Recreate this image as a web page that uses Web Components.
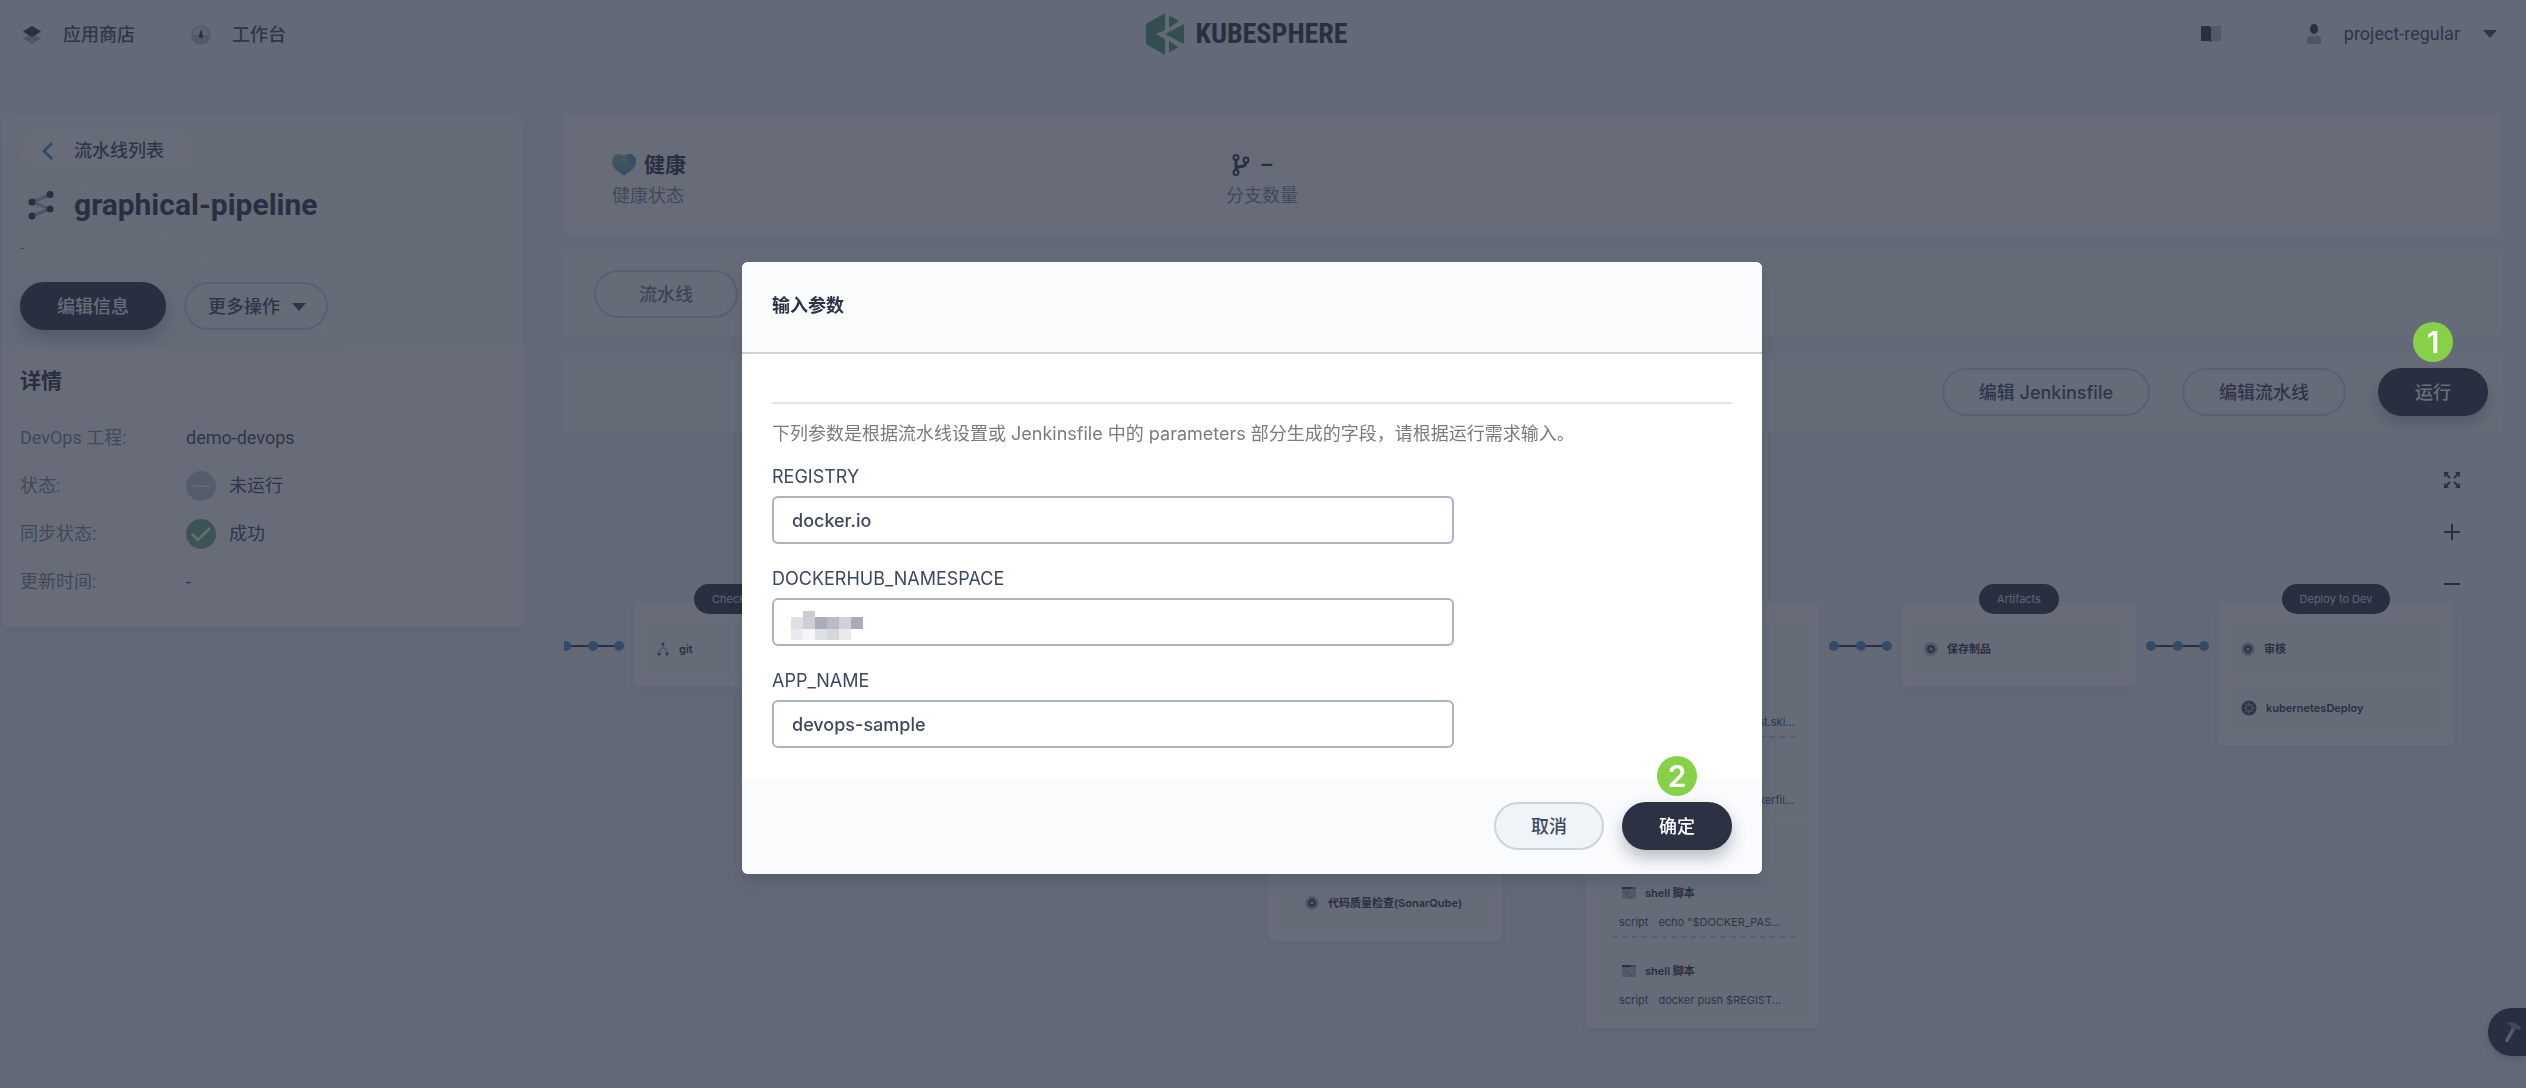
<!DOCTYPE html>
<html lang="zh-CN">
<head>
<meta charset="utf-8">
<title>KubeSphere</title>
<style>
    html, body {
        margin: 0;
        height: 100%;
        overflow: hidden;
    }
    body {
        background: #eff4f9;
        color: #2c3144;
        font-family: Roboto, "Noto Sans CJK SC", sans-serif;
        font-size: 18px;
        line-height: 28px;
    }
</style>
</head>
<body>
<ks-app></ks-app>

<script>
const ICONS = {
    store: ['0 0 20 20', '<path d="M1 13.500 10 8l9 5.500L10 19z" fill="#a9b3c1"/><path d="M1 6.500 10 1l9 5.500L10 12z" fill="#2c3144"/>'],
    dial: ['0 0 20 20', '<circle cx="10" cy="10" r="9" fill="#dfe4eb" stroke="#b6c0cc" stroke-width="1.500"/><path d="M1 10a9 9 0 0 0 18 0z" fill="#b6c0cc"/><path d="M10 4l2 7a2 2 0 1 1-4 0z" fill="#2c3144"/>'],
    book: ['0 0 20 16', '<path d="M0 0h8l2 1v15l-2-1H0z" fill="#2c3144"/><path d="M12 0h8v15h-8l-2 1V1z" fill="#b6c0cc"/>'],
    human: ['0 0 14 20', '<ellipse cx="7" cy="5" rx="4" ry="5" fill="#2c3144"/><path d="M0 20v-4q0-4 4-4.500 3 2 6 0 4 .5 4 4.500v4z" fill="#a9b3c1"/>'],
    caret: ['0 0 14 8', '<path d="M0 0h14L7 8z" fill="#3d4860"/>'],
    back: ['0 0 12 18', '<path d="M10 1 2 9l8 8" fill="none" stroke="#3a8cc8" stroke-width="2.500"/>'],
    pipeline: ['0 0 26 30', '<path d="M22 5 4 12l18 7L4 26" fill="none" stroke="#a9b3c1" stroke-width="3"/><g fill="#2c3144"><circle cx="22" cy="4.500" r="3.500"/><circle cx="4" cy="12" r="3.500"/><circle cx="22" cy="19" r="3.500"/><circle cx="4" cy="26" r="3.500"/></g>'],
    stopped: ['0 0 30 30', '<circle cx="15" cy="15" r="15" fill="#c0c8d2"/><path d="M7 15h16" stroke="#eff4f9" stroke-width="2"/>'],
    success: ['0 0 30 30', '<circle cx="15" cy="15" r="15" fill="#6fae8f"/><path d="m6 15 6 6L24 9" fill="none" stroke="#fff" stroke-width="2.500"/>'],
    heart: ['0 0 24 22', '<defs><linearGradient id="g" x1="0" y1="0" x2="0" y2="1"><stop offset="0" stop-color="#7ec095"/><stop offset=".5" stop-color="#6fb0a5"/><stop offset="1" stop-color="#4d94c8"/></linearGradient></defs><path d="M12 22C8 18 0 15 0 8 0 2 4 0 7 0q3 0 5 1.500Q14 0 17 0c3 0 7 2 7 8 0 7-8 10-12 14z" fill="url(#g)"/><path d="M16 0q-2 7 5 12 4-4 3-7-2-5-8-5z" fill="#5c9fb8"/>'],
    branch: ['-6 0 26 22', '<g fill="none" stroke="#2c3144" stroke-width="2"><circle cx="4" cy="3.500" r="2.500"/><circle cx="14" cy="6" r="2.500"/><circle cx="4" cy="18.500" r="2.500"/></g><path d="M4 6v10q0-3 5-3.500 5-.5 5-4" fill="none" stroke="#2c3144" stroke-width="3"/>'],
    expand: ['0 0 16 16', '<path d="m1 1 5 5M15 1l-5 5M1 15l5-5M15 15l-5-5" stroke="#2c3144" stroke-width="2"/><path d="M0 0h5L0 5zM16 0v5l-5-5zM0 16v-5l5 5zM16 16h-5l5-5z" fill="#2c3144"/>'],
    plus: ['0 0 16 16', '<path d="M8 0v16M0 8h16" stroke="#2c3144" stroke-width="2"/>'],
    minus: ['0 0 16 16', '<path d="M0 8h16" stroke="#2c3144" stroke-width="2"/>'],
    git: ['0 0 14 14', '<path d="M7 3v3M3 12q0-6 4-6t4 6" fill="none" stroke="#a9b3c1" stroke-width="1.500"/><g fill="#3d4860"><circle cx="7" cy="2" r="1.500"/><circle cx="3" cy="12" r="1.500"/><circle cx="11" cy="12" r="1.500"/></g>'],
    step: ['0 0 14 14', '<circle cx="7" cy="7" r="7" fill="#b6c0cc"/><circle cx="7" cy="7" r="3" fill="none" stroke="#3d4860" stroke-width="2.500"/>'],
    kube: ['0 0 16 16', '<circle cx="8" cy="8" r="7.500" fill="#3d4860"/><g fill="none" stroke="#a9b3c1"><circle cx="8" cy="8" r="3.500"/><path d="M8 2v4M8 10v4M2 8h4M10 8h4M4 4l2.500 2.500M9.500 9.500 12 12M12 4 9.500 6.500M6.500 9.500 4 12"/></g>'],
    shell: ['0 0 14 12', '<path d="M0 2h14v10H0z" fill="#b6c0cc"/><path d="M0 0h9v2H0z" fill="#2c3144"/><path d="M9 0h5v2H9z" fill="#7d8a9e"/><path d="m4 5 2 2-2 2M7 10h3" fill="none" stroke="#7d8a9e"/>'],
    hammer: ['0 0 18 22', '<path d="m8 7 3 1.500L4 21q-3 0-3-2z" fill="#c6ccd6"/><path d="M2 3q6-4 12 1l3 2-1.500 3-3-1L11 9 7 7V4z" fill="#7d8699"/>'],
    logo: ['0 0 38 42', '<g fill="#4f9b7a"><path d="M0 11 19 0v17L10 21l9 5v16L0 31z"/><path d="M23 2.500 33 8l-10 7z"/><path d="M38 11v20L19 21z"/><path d="M23 28l9.500 6L23 39.500z"/></g>']
};

// shared by every element: clones a template into an open shadow root
class KsElement extends HTMLElement {
    connectedCallback() {
        if (this.shadowRoot) return;
        const template = document.createElement('template');
        template.innerHTML = this.render();
        this.attachShadow({ mode: 'open' }).appendChild(template.content.cloneNode(true));
    }

    attr(name, fallback = '') {
        return this.getAttribute(name) || fallback;
    }
}

class KsIcon extends KsElement {
    render() {
        const [viewBox, body] = ICONS[this.attr('name')];
        const [, , width, height] = viewBox.split(' ');
        return `
            <style>
                :host { display: inline-flex; flex: none; }
                svg { display: block; }
            </style>
            <svg viewBox="${viewBox}" width="${width}" height="${height}" aria-hidden="true">${body}</svg>
        `;
    }
}

class KsButton extends KsElement {
    render() {
        return `
            <style>
                :host { display: inline-block; position: relative; }
                button {
                    display: flex;
                    align-items: center;
                    justify-content: center;
                    gap: 12px;
                    box-sizing: border-box;
                    height: 48px;
                    padding: 2px 35px 0;
                    border: 2px solid #ccd3db;
                    border-radius: 24px;
                    background: #eff4f9;
                    color: #3d4860;
                    font: inherit;
                    font-weight: 500;
                    white-space: nowrap;
                }
                :host([kind="ghost"]) button { background: transparent; }
                :host([kind="menu"]) button { background: transparent; padding: 2px 20px 0 22px; }
                :host([kind="tab"]) button { background: transparent; padding: 2px 43px 0; color: #6a7488; }
                :host([kind="primary"]) button {
                    border-color: #2c3144;
                    background: #2c3144;
                    color: #fff;
                    box-shadow: 0 8px 16px rgba(36, 46, 66, .3);
                }
            </style>
            <button type="button"><slot></slot></button>
            <slot name="badge"></slot>
        `;
    }
}

// numbered marker that floats above a button, over the mask as well
class StepBadge extends KsElement {
    render() {
        return `
            <style>
                :host {
                    position: absolute;
                    left: 50%;
                    bottom: 100%;
                    z-index: 20;
                    width: 40px;
                    height: 40px;
                    margin: 0 0 6px -20px;
                    border-radius: 50%;
                    background: #87d148;
                    color: #fff;
                    font: 600 30px/40px Inter, sans-serif;
                    text-align: center;
                }
            </style>
            <slot></slot>
        `;
    }
}

class KsHeader extends KsElement {
    render() {
        return `
            <style>
                :host {
                    display: grid;
                    grid-template-columns: 1fr auto 1fr;
                    box-sizing: border-box;
                    height: 83px;
                    padding: 13px 54px 0 22px;
                    border-bottom: 1px solid #e9eef4;
                }
                a { color: #3d4860; text-decoration: none; font-weight: 500; }
                nav, .user { display: flex; align-items: center; height: 42px; }
                nav { gap: 56px; }
                nav a { display: flex; align-items: center; gap: 21px; padding-top: 2px; }
                .logo {
                    display: flex;
                    align-items: center;
                    gap: 11px;
                    height: 42px;
                    color: #2c3144;
                    font-family: "Liberation Sans Narrow", "Roboto Condensed", Roboto, sans-serif;
                    font-size: 28px;
                    font-weight: 700;
                }
                .user { justify-content: flex-end; gap: 23px; margin-right: -25px; }
                .user ks-icon:first-child { margin-right: 63px; }
                .user a { font-weight: 400; }
            </style>
            <nav>
                <a href="#apps"><ks-icon name="store"></ks-icon>应用商店</a>
                <a href="#workbench"><ks-icon name="dial"></ks-icon>工作台</a>
            </nav>
            <a class="logo" href="#home"><ks-icon name="logo"></ks-icon>KUBESPHERE</a>
            <div class="user">
                <ks-icon name="book"></ks-icon>
                <ks-icon name="human"></ks-icon>
                <a href="#user">project-regular</a>
                <ks-icon name="caret"></ks-icon>
            </div>
        `;
    }
}

class KsSidebar extends KsElement {
    render() {
        return `
            <style>
                :host {
                    display: block;
                    border-radius: 6px;
                    background: #fff;
                    box-shadow: 0 4px 8px rgba(36, 46, 66, .08);
                    overflow: hidden;
                }
                .top {
                    box-sizing: border-box;
                    height: 234px;
                    padding: 18px 18px 0;
                    background: linear-gradient(211deg, #f5f8fb 38%, #f9fbfd 38%, #f9fbfd 62%, #f6f9fc 62%);
                }
                .back {
                    display: inline-flex;
                    align-items: center;
                    gap: 20px;
                    box-sizing: border-box;
                    height: 36px;
                    padding: 2px 30px 0 22px;
                    border-radius: 18px;
                    background: #fff;
                    color: #3d4860;
                    font-weight: 500;
                    text-decoration: none;
                }
                h1 {
                    display: flex;
                    align-items: center;
                    gap: 20px;
                    margin: 16px 0 0 8px;
                    color: #2c3144;
                    font-size: 30px;
                    font-weight: 700;
                    line-height: 42px;
                }
                .desc { margin: 12px 0 22px; color: #79879c; font-size: 16px; line-height: 22px; }
                .actions { display: flex; gap: 18px; }
                .detail { padding: 19px 18px 31px; }
                h2 { margin: 0 0 29px; font-size: 21px; font-weight: 700; line-height: 28px; }
                dl {
                    display: grid;
                    grid-template-columns: 166px 1fr;
                    grid-auto-rows: 28px;
                    gap: 20px 0;
                    margin: 0;
                }
                dt { color: #79879c; }
                dd { display: flex; align-items: center; gap: 13px; margin: 0; color: #3d4860; }
            </style>
            <div class="top">
                <a class="back" href="#pipelines"><ks-icon name="back"></ks-icon>流水线列表</a>
                <h1><ks-icon name="pipeline"></ks-icon>graphical-pipeline</h1>
                <p class="desc">-</p>
                <div class="actions">
                    <ks-button kind="primary">编辑信息</ks-button>
                    <ks-button kind="menu">更多操作<ks-icon name="caret"></ks-icon></ks-button>
                </div>
            </div>
            <div class="detail">
                <h2>详情</h2>
                <dl>
                    <dt>DevOps 工程:</dt><dd>demo-devops</dd>
                    <dt>状态:</dt><dd><ks-icon name="stopped"></ks-icon>未运行</dd>
                    <dt>同步状态:</dt><dd><ks-icon name="success"></ks-icon>成功</dd>
                    <dt>更新时间:</dt><dd>-</dd>
                </dl>
            </div>
        `;
    }
}

class StatusItem extends KsElement {
    render() {
        return `
            <style>
                :host { display: block; }
                .value {
                    display: flex;
                    align-items: center;
                    gap: 8px;
                    font-size: 21px;
                    font-weight: 700;
                    line-height: 28px;
                }
                .label { color: #79879c; line-height: 34px; }
            </style>
            <div class="value"><ks-icon name="${this.attr('icon')}"></ks-icon><slot></slot></div>
            <div class="label">${this.attr('label')}</div>
        `;
    }
}

class PipelineLink extends KsElement {
    render() {
        return `
            <style>
                :host { display: block; flex: none; padding: 57px 10px 0; }
                svg { display: block; }
            </style>
            <svg width="63" height="10" viewBox="0 0 63 10" aria-hidden="true">
                <path d="M5 5h53" stroke="#2c3144" stroke-width="2"/>
                <g fill="#4a90c8"><circle cx="5" cy="5" r="5"/><circle cx="32" cy="5" r="5"/><circle cx="58" cy="5" r="5"/></g>
            </svg>
        `;
    }
}

class PipelineStage extends KsElement {
    render() {
        const name = this.attr('name');
        return `
            <style>
                :host {
                    display: flex;
                    flex: none;
                    flex-direction: column;
                    align-items: center;
                    width: 234px;
                    font-family: Inter, "Noto Sans CJK SC", sans-serif;
                    font-size: 11px;
                    line-height: 16px;
                }
                .name {
                    position: relative;
                    box-sizing: border-box;
                    height: 30px;
                    margin-bottom: -12px;
                    padding: 7px 18px;
                    border-radius: 15px;
                    background: #2c3144;
                    color: #dfe4eb;
                }
                .name:empty { visibility: hidden; }
                .box {
                    display: grid;
                    gap: 8px;
                    box-sizing: border-box;
                    width: 100%;
                    padding: 22px 12px 12px;
                    border-radius: 6px;
                    background: #fff;
                    box-shadow: 0 4px 8px rgba(36, 46, 66, .06);
                }
            </style>
            <div class="name">${name}</div>
            <div class="box"><slot></slot></div>
        `;
    }
}

class StepGroup extends KsElement {
    render() {
        return `
            <style>
                :host {
                    display: flex;
                    flex-direction: column;
                    justify-content: flex-end;
                    box-sizing: border-box;
                    padding: 36px 15px 0;
                    background: #f9fbfd;
                }
                :host([tall]) { min-height: 305px; }
            </style>
            <slot></slot>
        `;
    }
}

class StepItem extends KsElement {
    render() {
        return `
            <style>
                :host {
                    display: flex;
                    align-items: center;
                    gap: 9px;
                    box-sizing: border-box;
                    height: 51px;
                    padding: 0 10px 2px;
                    background: #f9fbfd;
                    font-weight: 600;
                    white-space: nowrap;
                }
            </style>
            <ks-icon name="${this.attr('icon', 'step')}"></ks-icon><slot></slot>
        `;
    }
}

class ShellStep extends KsElement {
    render() {
        const label = this.attr('label');
        return `
            <style>
                :host {
                    display: block;
                    padding: 25px 0 6px;
                    border-bottom: 2px dashed #ccd3db;
                    white-space: nowrap;
                }
                :host(:last-child) { border-color: transparent; }
                .title { display: flex; align-items: center; gap: 9px; height: 16px; padding-left: 10px; font-weight: 600; }
                .param { display: flex; gap: 10px; margin-top: 13px; padding-left: 7px; color: #3d4860; }
            </style>
            <div class="title"><ks-icon name="shell"></ks-icon>${label}</div>
            <div class="param"><span>script</span><span><slot></slot></span></div>
        `;
    }
}

class ParamField extends KsElement {
    render() {
        return `
            <style>
                :host { display: block; color: #3d4860; }
                label { display: block; padding: 2px 0 5px; line-height: 28px; }
                .control { position: relative; max-width: 682px; }
                input {
                    display: block;
                    box-sizing: border-box;
                    width: 100%;
                    height: 48px;
                    padding: 0 18px;
                    border: 2px solid #abb4be;
                    border-radius: 6px;
                    background: #fff;
                    color: #3d4860;
                    font: inherit;
                    font-weight: 500;
                    outline: none;
                }
            </style>
            <label for="value">${this.attr('label')}</label>
            <div class="control">
                <input id="value" type="text" value="${this.attr('value')}">
                <slot></slot>
            </div>
        `;
    }
}

// pixelated cover for a private value
class MaskedValue extends KsElement {
    render() {
        return `
            <style>
                :host { position: absolute; left: 19px; top: 13px; }
                svg { display: block; }
            </style>
            <svg width="72" height="30" shape-rendering="crispEdges" aria-hidden="true">
                <path d="M12 0h12v6H12z" fill="#c9ccd5"/>
                <path d="M0 6h12v12H0z" fill="#dfe0e5"/><path d="M12 6h12v12H12z" fill="#cdced6"/>
                <path d="M24 6h12v12H24z" fill="#a9acb9"/><path d="M36 6h12v12H36z" fill="#b9bcc8"/>
                <path d="M48 6h12v12H48z" fill="#d0d2da"/><path d="M60 6h12v12H60z" fill="#a9acb9"/>
                <path d="M0 18h12v11H0z" fill="#e9eaed"/><path d="M12 18h12v11H12z" fill="#f5f5f7"/>
                <path d="M24 18h12v11H24z" fill="#dfe0e5"/><path d="M36 18h12v11H36z" fill="#d6d8de"/>
                <path d="M48 18h12v11H48z" fill="#e9eaed"/>
            </svg>
        `;
    }
}

class ParamsModal extends KsElement {
    render() {
        return `
            <style>
                :host {
                    position: fixed;
                    inset: 0;
                    z-index: 10;
                    display: flex;
                    align-items: center;
                    justify-content: center;
                    box-sizing: border-box;
                    padding: 48px 22px 0 0;
                    background: rgba(40, 45, 63, .7);
                    font-family: Inter, "Noto Sans CJK SC", sans-serif;
                }
                section {
                    width: 1020px;
                    max-width: 100%;
                    border-radius: 6px;
                    background: #fff;
                    box-shadow: 0 8px 16px rgba(36, 46, 66, .2);
                    overflow: hidden;
                }
                header {
                    padding: 30px 30px 32px;
                    border-bottom: 2px solid #ccd3db;
                    background: #f9fbfd;
                }
                h3 { margin: 0; font-size: 18px; font-weight: 700; line-height: 28px; }
                .body { display: grid; gap: 19px; padding: 48px 30px 30px; }
                p {
                    margin: 0 0 -6px;
                    padding-top: 16px;
                    border-top: 2px solid #e3e5e5;
                    color: #7b7b7b;
                    line-height: 28px;
                }
                footer {
                    display: flex;
                    justify-content: flex-end;
                    gap: 18px;
                    padding: 24px 30px;
                    background: #f9fbfd;
                }
            </style>
            <section role="dialog" aria-labelledby="title">
                <header><h3 id="title">输入参数</h3></header>
                <div class="body">
                    <p>下列参数是根据流水线设置或 Jenkinsfile 中的 parameters 部分生成的字段，请根据运行需求输入。</p>
                    <param-field label="REGISTRY" value="docker.io"></param-field>
                    <param-field label="DOCKERHUB_NAMESPACE"><masked-value></masked-value></param-field>
                    <param-field label="APP_NAME" value="devops-sample"></param-field>
                </div>
                <footer>
                    <ks-button>取消</ks-button>
                    <ks-button kind="primary">确定<step-badge slot="badge">2</step-badge></ks-button>
                </footer>
            </section>
        `;
    }
}

class KsApp extends KsElement {
    render() {
        return `
            <style>
                :host { display: flex; flex-direction: column; height: 100vh; overflow: hidden; }
                .page {
                    display: grid;
                    flex: 1;
                    grid-template-columns: 522px minmax(0, 1fr);
                    gap: 40px;
                    min-height: 0;
                    padding: 31px 24px 0 2px;
                }
                ks-sidebar { align-self: start; }
                main { display: flex; flex-direction: column; min-height: 0; }
                .status, .tabs { margin-bottom: 18px; border-radius: 6px; }
                .status {
                    display: grid;
                    grid-template-columns: 614px 1fr;
                    box-sizing: border-box;
                    height: 120px;
                    padding: 37px 48px 0;
                    background: #fff;
                }
                .tabs { padding: 18px 30px; background: #f9fbfd; }
                .toolbar {
                    display: flex;
                    justify-content: flex-end;
                    gap: 32px;
                    padding: 14px 14px 16px;
                    background: #f9fbfd;
                    font-family: Inter, "Noto Sans CJK SC", sans-serif;
                }
                .canvas {
                    position: relative;
                    flex: 1;
                    padding-top: 152px;
                    overflow: hidden;
                    background: #eff4f9 radial-gradient(circle, #e8edf3 1px, transparent 1px) 0 0 / 8px 8px;
                }
                .stages { display: flex; align-items: flex-start; margin-left: -13px; }
                .zoom {
                    position: absolute;
                    top: 40px;
                    right: 42px;
                    display: grid;
                    gap: 36px;
                }
                .zoom button, .tools { display: flex; padding: 0; border: 0; background: none; }
                .tools {
                    position: fixed;
                    right: 0;
                    bottom: 32px;
                    align-items: center;
                    box-sizing: border-box;
                    width: 38px;
                    height: 48px;
                    padding-left: 16px;
                    border-radius: 24px 0 0 24px;
                    background: #2c3144;
                    box-shadow: 0 4px 8px rgba(36, 46, 66, .2);
                }
            </style>
            <ks-header></ks-header>
            <div class="page">
                <ks-sidebar></ks-sidebar>
                <main>
                    <div class="status">
                        <status-item icon="heart" label="健康状态">健康</status-item>
                        <status-item icon="branch" label="分支数量">–</status-item>
                    </div>
                    <div class="tabs"><ks-button kind="tab">流水线</ks-button></div>
                    <div class="toolbar">
                        <ks-button kind="ghost">编辑 Jenkinsfile</ks-button>
                        <ks-button kind="ghost">编辑流水线</ks-button>
                        <ks-button kind="primary">运行<step-badge slot="badge">1</step-badge></ks-button>
                    </div>
                    <div class="canvas">
                        <div class="stages">
                            <pipeline-link></pipeline-link>
                            <pipeline-stage name="Checkout SCM">
                                <step-item icon="git">git</step-item>
                            </pipeline-stage>
                            <pipeline-link></pipeline-link>
                            <pipeline-stage><step-group></step-group></pipeline-stage>
                            <pipeline-link></pipeline-link>
                            <pipeline-stage>
                                <step-group tall><step-item>代码质量检查(SonarQube)</step-item></step-group>
                            </pipeline-stage>
                            <pipeline-link></pipeline-link>
                            <pipeline-stage>
                                <step-group>
                                    <shell-step>mvn -s -Dmaven.test.ski...</shell-step>
                                    <shell-step>docker build -f Dockerfil...</shell-step>
                                </step-group>
                                <step-group>
                                    <shell-step label="shell 脚本">echo "$DOCKER_PAS...</shell-step>
                                    <shell-step label="shell 脚本">docker push $REGIST...</shell-step>
                                </step-group>
                            </pipeline-stage>
                            <pipeline-link></pipeline-link>
                            <pipeline-stage name="Artifacts">
                                <step-item>保存制品</step-item>
                            </pipeline-stage>
                            <pipeline-link></pipeline-link>
                            <pipeline-stage name="Deploy to Dev">
                                <step-item>审核</step-item>
                                <step-item icon="kube">kubernetesDeploy</step-item>
                            </pipeline-stage>
                        </div>
                        <div class="zoom">
                            <button type="button" aria-label="全屏"><ks-icon name="expand"></ks-icon></button>
                            <button type="button" aria-label="放大"><ks-icon name="plus"></ks-icon></button>
                            <button type="button" aria-label="缩小"><ks-icon name="minus"></ks-icon></button>
                        </div>
                    </div>
                </main>
            </div>
            <button class="tools" type="button" aria-label="工具箱"><ks-icon name="hammer"></ks-icon></button>
            <params-modal></params-modal>
        `;
    }
}

customElements.define('ks-icon', KsIcon);
customElements.define('ks-button', KsButton);
customElements.define('step-badge', StepBadge);
customElements.define('ks-header', KsHeader);
customElements.define('ks-sidebar', KsSidebar);
customElements.define('status-item', StatusItem);
customElements.define('pipeline-link', PipelineLink);
customElements.define('pipeline-stage', PipelineStage);
customElements.define('step-group', StepGroup);
customElements.define('step-item', StepItem);
customElements.define('shell-step', ShellStep);
customElements.define('param-field', ParamField);
customElements.define('masked-value', MaskedValue);
customElements.define('params-modal', ParamsModal);
customElements.define('ks-app', KsApp);
</script>
</body>
</html>
